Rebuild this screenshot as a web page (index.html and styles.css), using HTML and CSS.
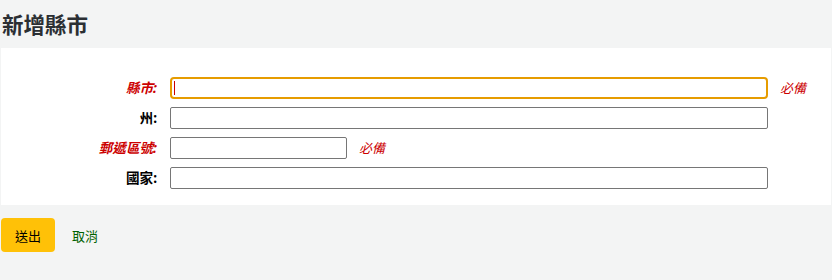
FILE: index.html
```html
<!DOCTYPE html>
<html lang="zh-Hant">
<head>
<meta charset="utf-8">
<title>新增縣市</title>
<link rel="stylesheet" href="styles.css">
</head>
<body>
<h1 class="title">新增縣市</h1>
<form class="form">
  <div class="panel">
    <div class="row">
      <label class="label required" for="city">縣市:</label>
      <span class="field-wrap focused"><input class="input wide focus" id="city" type="text"></span>
      <span class="req">必備</span>
    </div>
    <div class="row">
      <label class="label" for="state">州:</label>
      <input class="input wide" id="state" type="text">
    </div>
    <div class="row">
      <label class="label required" for="zip">郵遞區號:</label>
      <input class="input short" id="zip" type="text">
      <span class="req">必備</span>
    </div>
    <div class="row">
      <label class="label" for="country">國家:</label>
      <input class="input wide" id="country" type="text">
    </div>
  </div>
  <div class="actions">
    <button class="btn-submit" type="button">送出</button>
    <a class="cancel" href="#">取消</a>
  </div>
</form>
</body>
</html>
```

FILE: styles.css
```css
html, body {
  margin: 0;
  padding: 0;
}
body {
  background: #f3f4f4;
  font-family: "Noto Sans", "Noto Sans CJK TC", sans-serif;
  font-size: 13.6px;
  color: #000;
  width: 832px;
  height: 280px;
  overflow: hidden;
}
.title {
  margin: 0;
  height: 48px;
  box-sizing: border-box;
  padding: 1px 2px 0;
  display: flex;
  align-items: center;
  font-size: 21.5px;
  line-height: 24px;
  font-weight: bold;
  color: #2b2f33;
}
.form {
  margin: 0;
}
.panel {
  background: #fff;
  margin-left: 1px;
  width: 830px;
  height: 157px;
  box-sizing: border-box;
  padding: 29px 0 0;
  display: flex;
  flex-direction: column;
  gap: 8px;
}
.row {
  display: flex;
  align-items: center;
  height: 22px;
  flex: none;
}
.label {
  width: 156px;
  margin-right: 13px;
  text-align: right;
  font-weight: bold;
  line-height: 16px;
}
.label.required {
  color: #cc0000;
  font-style: italic;
}
.input {
  box-sizing: border-box;
  height: 22px;
  border: 1px solid #767676;
  border-radius: 2px;
  background: #fff;
  padding: 0 3px;
  font: inherit;
  margin: 0;
  outline: none;
}
.wide {
  width: 598px;
}
.short {
  width: 177px;
}
.field-wrap {
  position: relative;
  display: block;
  width: 598px;
  height: 22px;
}
.input.focus {
  border: 2px solid #e69c00;
  border-radius: 4px;
  width: 100%;
}
.field-wrap.focused::after {
  content: "";
  position: absolute;
  left: 4px;
  top: 4px;
  width: 1px;
  height: 14px;
  background: #cc0000;
}
.req {
  margin-left: 12px;
  color: #cc0000;
  font-style: italic;
  font-size: 13px;
  line-height: 16px;
}
.actions {
  display: flex;
  align-items: center;
  height: 34px;
  margin-top: 13px;
  padding-left: 1px;
  gap: 17px;
}
.btn-submit {
  width: 54px;
  height: 34px;
  border: none;
  border-radius: 4px;
  background: #ffc107;
  color: #000;
  font: inherit;
  font-size: 13px;
  padding: 0;
  cursor: pointer;
}
.cancel {
  color: #006100;
  font-size: 13px;
  text-decoration: none;
}
```
